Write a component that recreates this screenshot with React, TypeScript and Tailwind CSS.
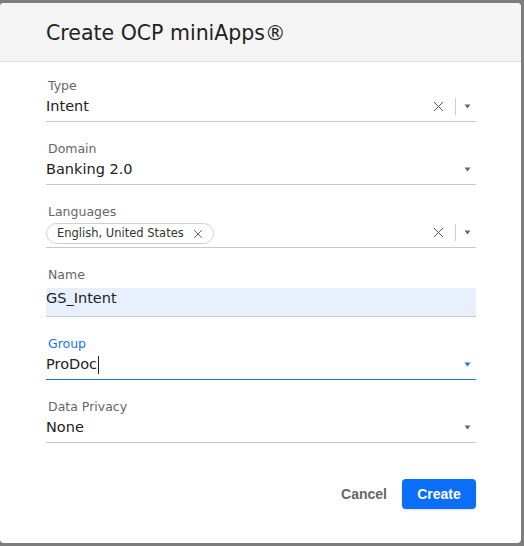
import { X } from 'lucide-react';

const font = { fontFamily: '"DejaVu Sans", "Liberation Sans", sans-serif' };

const Arrow = ({ color = '#666' }: { color?: string }) => (
  <svg width="7" height="5" viewBox="0 0 7 5" className="ml-[8px] mr-[5px]">
    <path d="M0.5 0.5 L6.5 0.5 L3.5 4.5 Z" fill={color} />
  </svg>
);

const Controls = ({ clear }: { clear?: boolean }) => (
  <div className="flex items-center">
    {clear && (
      <>
        <X className="h-[17px] w-[17px] text-[#555]" strokeWidth={1.4} />
        <div className="ml-[8px] h-[17px] w-px bg-[#ccc]" />
      </>
    )}
    <Arrow />
  </div>
);

const Field = ({
  label,
  children,
  clear,
}: {
  label: string;
  children: React.ReactNode;
  clear?: boolean;
}) => (
  <div className="mb-[19px] border-b border-[#c8c8c8]">
    <div className="h-[16px] pl-[2px] text-[12.5px] leading-[16px] text-[#666]">{label}</div>
    <div className="mt-[2px] flex h-[25px] items-center justify-between pb-[4px]">
      {children}
      <Controls clear={clear} />
    </div>
  </div>
);

export default function App() {
  return (
    <div className="h-[546px] w-[524px] bg-[#7d7d7d] pt-[3px]" style={font}>
      <div className="flex h-[540px] w-[521px] flex-col overflow-hidden rounded-[4px] bg-white">
        {/* header */}
        <div className="flex h-[59px] items-center border-b border-[#dedede] bg-[#f5f5f5] pl-[46px]">
          <h1 className="mt-[2px] text-[20.5px] text-[#222]">Create OCP miniApps®</h1>
        </div>

        <div className="pl-[46px] pr-[45px] pt-[16px] text-[14.5px] text-[#222]">
          <Field label="Type" clear>
            <span>Intent</span>
          </Field>

          <Field label="Domain">
            <span>Banking 2.0</span>
          </Field>

          <Field label="Languages" clear>
            <span className="mt-[2px] flex h-[21px] items-center rounded-full border border-[#cfcfcf] pl-[10px] pr-[8px] text-[11.5px] text-[#333]">
              English, United States
              <X className="ml-[7px] h-[14px] w-[14px] text-[#555]" strokeWidth={1.6} />
            </span>
          </Field>

          {/* name */}
          <div className="mb-[19px] border-b border-[#c8c8c8]">
            <div className="h-[16px] pl-[2px] text-[12.5px] leading-[16px] text-[#666]">Name</div>
            <div className="mt-[5px] h-[28px] bg-[#e8f0fe] leading-[20px]">GS_Intent</div>
          </div>

          {/* group (focused) */}
          <div className="mb-[19px] border-b border-[#1a73e8]">
            <div className="h-[16px] pl-[2px] text-[12.5px] leading-[16px] text-[#1a73e8]">Group</div>
            <div className="mt-[2px] flex h-[25px] items-center justify-between pb-[4px]">
              <span className="flex items-center">
                ProDoc<span className="ml-px inline-block h-[18px] w-px bg-[#222]" />
              </span>
              <Arrow color="#1a73e8" />
            </div>
          </div>

          <Field label="Data Privacy">
            <span>None</span>
          </Field>

          <div className="mt-[36px] flex items-center justify-end gap-[15px]" style={{ fontFamily: '"Liberation Sans", Arial, sans-serif' }}>
            <button className="text-[14px] font-bold text-[#666]">Cancel</button>
            <button className="h-[30px] w-[74px] rounded-[4px] bg-[#0b6ef9] text-[14px] font-bold text-white shadow-sm">
              Create
            </button>
          </div>
        </div>
      </div>
    </div>
  );
}
